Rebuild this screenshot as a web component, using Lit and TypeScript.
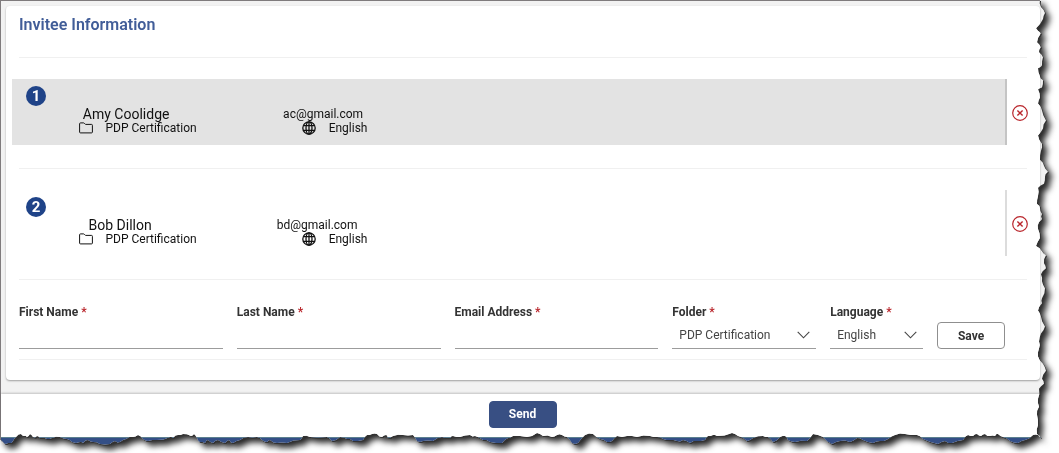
import { LitElement, html, css, svg } from "lit";
import { customElement, property, state } from "lit/decorators.js";
import { styleMap } from "lit/directives/style-map.js";

interface Invitee {
  name: string;
  email: string;
  folder: string;
  language: string;
}

// Torn paper outline. Each entry is [distance along the edge, depth of the tear].
const EDGE_LENGTH_RIGHT = 443;
const EDGE_LENGTH_BOTTOM = 1048;

const RIGHT_TEAR: number[][] = [
  [0, 8], [7, 7], [13, 3], [19, 5], [28, 12], [33, 7], [42, 11], [47, 7], [52, 9], [57, 5], [65, 6], [68, 10],
  [76, 8], [80, 5], [87, 6], [89, 10], [97, 8], [103, 10], [110, 6], [120, 2], [128, 5], [135, 10], [143, 6],
  [150, 7], [159, 8], [165, 4], [171, 0], [176, 3], [183, 4], [187, 10], [195, 10], [203, 11], [207, 8], [213, 6],
  [218, 6], [221, 9], [228, 10], [237, 8], [245, 12], [250, 6], [254, 2], [262, 4], [267, 2], [273, 7], [280, 6],
  [287, 3], [297, 6], [302, 6], [309, 10], [315, 7], [325, 3], [332, 7], [340, 9], [347, 9], [355, 10], [362, 5],
  [369, 2], [377, 6], [382, 4], [387, 9], [397, 10], [405, 9], [413, 11], [423, 10], [432, 11], [436, 7],
];

const BOTTOM_TEAR: number[][] = [
  [0, 5], [3, 3], [6, 1], [10, 2], [13, 4], [16, 8], [21, 11], [24, 9], [27, 8], [30, 11], [33, 8], [37, 9],
  [40, 7], [47, 6], [52, 7], [60, 8], [67, 6], [72, 3], [80, 3], [83, 2], [88, 5], [93, 3], [100, 1], [110, 1],
  [115, 4], [120, 3], [126, 6], [133, 8], [138, 10], [143, 6], [148, 4], [157, 5], [170, 8], [173, 7], [178, 10],
  [183, 11], [191, 9], [194, 11], [197, 7], [200, 3], [205, 2], [208, 5], [213, 2], [218, 5], [225, 2], [229, 5],
  [233, 2], [240, 5], [248, 8], [257, 8], [262, 5], [267, 3], [270, 5], [277, 2], [287, 2], [300, 5], [303, 9],
  [310, 8], [327, 8], [332, 4], [340, 8], [347, 6], [353, 4], [363, 5], [367, 10], [372, 11], [377, 11], [382, 8],
  [386, 10], [388, 7], [393, 9], [403, 10], [413, 10], [417, 4], [423, 4], [433, 4], [442, 8], [450, 7], [453, 9],
  [460, 8], [470, 10], [475, 9], [483, 5], [490, 3], [502, 2], [508, 7], [513, 9], [527, 8], [537, 12], [543, 9],
  [552, 8], [557, 10], [562, 10], [567, 8], [572, 2], [578, 2], [585, 10], [593, 11], [600, 6], [607, 3],
  [612, 4], [617, 9], [627, 9], [637, 8], [650, 9], [657, 8], [663, 6], [670, 5], [677, 4], [683, 5], [690, 2],
  [697, 4], [705, 5], [708, 9], [713, 10], [717, 9], [732, 12], [738, 9], [747, 4], [753, 7], [763, 9], [768, 8],
  [773, 3], [780, 8], [785, 9], [788, 5], [795, 3], [807, 4], [813, 11], [823, 8], [832, 1], [840, 4], [850, 3],
  [857, 7], [863, 5], [873, 2], [880, 4], [888, 6], [895, 10], [905, 11], [917, 10], [923, 6], [938, 1], [945, 4],
  [952, 2], [963, 5], [968, 10], [973, 9], [977, 11], [981, 9], [985, 11], [990, 9], [995, 9], [998, 11],
  [1003, 8], [1010, 4], [1018, 2], [1025, 5], [1033, 10], [1038, 10],
];

const JITTER = [0.8, -0.6, 0.4, -0.9, 0.6, 0.9, -0.4];

function roughen(points: number[][]): number[][] {
  const out: number[][] = [];
  points.forEach(([at, depth], i) => {
    out.push([at, depth]);
    const next = points[i + 1];
    if (next) {
      const middle = (depth + next[1]) / 2 + JITTER[i % JITTER.length];
      out.push([(at + next[0]) / 2, Math.max(0, middle)]);
    }
  });
  return out;
}

function tornPolygon(): string {
  const right = roughen(RIGHT_TEAR).map(
    ([at, depth]) => `calc(100% - ${depth}px) ${(at / EDGE_LENGTH_RIGHT) * 100}%`,
  );
  const bottom = roughen(BOTTOM_TEAR)
    .reverse()
    .map(([at, depth]) => `${(at / EDGE_LENGTH_BOTTOM) * 100}% calc(100% - ${depth}px)`);
  return `polygon(0 0, ${[...right, ...bottom].join(", ")})`;
}

const folderIcon = svg`<svg class="icon" width="14" height="12" viewBox="0 0 14 12" fill="none" stroke="currentColor" aria-hidden="true">
  <path d="M.6 10V1.8Q.6.9 1.5.9H4.6Q5 .9 5.3 1.3L6.1 2.1Q6.4 2.4 6.9 2.4H12.5Q13.4 2.4 13.4 3.3V10Q13.4 10.9 12.5 10.9H1.5Q.6 10.9.6 10Z"/>
</svg>`;

const globeIcon = svg`<svg class="icon" width="14" height="14" viewBox="0 0 14 14" fill="none" stroke="currentColor" stroke-width="1.3" aria-hidden="true">
  <circle cx="7" cy="7" r="6.2"/><ellipse cx="7" cy="7" rx="3" ry="6.2"/>
  <path d="M7 .8V13.2M1.4 4.6H12.6M1.4 9.4H12.6"/>
</svg>`;

@customElement("invitee-row")
export class InviteeRow extends LitElement {
  @property({ attribute: false }) invitee!: Invitee;
  @property({ type: Number }) position = 1;
  @property({ type: Boolean }) shaded = false;

  static styles = css`
    :host {
      display: grid;
      grid-template-columns: 1fr 26px;
      align-items: stretch;
      padding: 21px 0 23px;
      color: #111;
    }
    .summary {
      box-sizing: border-box;
      padding: 7px 0 8px 14px;
      border-right: 2px solid #dcdcdc;
      min-height: 66px;
    }
    .shaded {
      background: #e3e3e3;
      border-right-color: #c4c4c4;
    }
    .badge {
      display: flex;
      align-items: center;
      justify-content: center;
      width: 20px;
      height: 20px;
      margin-bottom: 1px;
      border-radius: 50%;
      background: #1f4388;
      color: #fff;
      font-size: 15px;
      font-weight: 700;
      line-height: 20px;
    }
    .line {
      display: flex;
      justify-content: space-around;
      align-items: center;
      width: 394px;
      max-width: 100%;
      height: 14px;
    }
    .name {
      font-size: 14px;
      line-height: 14px;
    }
    .email {
      font-size: 12px;
      line-height: 14px;
    }
    .detail {
      display: flex;
      align-items: center;
      gap: 13px;
      font-size: 12px;
      line-height: 14px;
    }
    .icon {
      display: block;
    }
    .remove {
      align-self: center;
      justify-self: center;
      display: block;
      padding: 2px 0 0;
      border: 0;
      background: none;
      color: #b9252b;
      cursor: pointer;
    }
  `;

  render() {
    const { name, email, folder, language } = this.invitee;
    return html`
      <div class="summary ${this.shaded ? "shaded" : ""}">
        <div class="badge">${this.position}</div>
        <div class="line">
          <span class="name">${name}</span>
          <span class="email">${email}</span>
        </div>
        <div class="line">
          <span class="detail">${folderIcon}<span>${folder}</span></span>
          <span class="detail">${globeIcon}<span>${language}</span></span>
        </div>
      </div>
      <button class="remove" type="button" aria-label="Remove ${name}">
        <svg class="icon" width="16" height="16" viewBox="0 0 16 16" fill="none" stroke="currentColor" aria-hidden="true">
          <circle cx="8" cy="8" r="7.3" stroke-width="1.2" />
          <path d="M5.4 5.4 10.6 10.6M10.6 5.4 5.4 10.6" stroke-width="1.4" />
        </svg>
      </button>
    `;
  }
}

@customElement("app-root")
export class AppRoot extends LitElement {
  @state() private invitees: Invitee[] = [
    { name: "Amy Coolidge", email: "ac@gmail.com", folder: "PDP Certification", language: "English" },
    { name: "Bob Dillon", email: "bd@gmail.com", folder: "PDP Certification", language: "English" },
  ];

  static styles = css`
    :host {
      display: block;
      padding: 0 11px 10px 0;
      background: #fff;
      font-family: Roboto, "Liberation Sans", sans-serif;
      color: #333;
    }
    .paper {
      filter: drop-shadow(1px 1px 0 #333) drop-shadow(4px 4px 3px rgba(0, 0, 0, 0.85));
    }
    .page {
      box-sizing: border-box;
      border-top: 1px solid #7f7b7d;
      border-left: 1px solid #7f7b7d;
      background: #f2f2f2;
    }
    .area {
      padding: 5px 8px 14px 5px;
    }
    .card {
      padding: 0 7px 20px 6px;
      border-radius: 4px;
      background: #fff;
      box-shadow: 0 1px 2px rgba(0, 0, 0, 0.35);
    }
    .title {
      margin: 0 7px;
      padding: 8px 0 22px;
      color: #415d98;
      font-size: 16px;
      font-weight: 600;
      line-height: 21px;
    }
    .rule {
      height: 1px;
      margin: 0 6px 0 7px;
      border: 0;
      background: #f0f0f0;
    }
    .form {
      display: grid;
      grid-template-columns: 204fr 204fr 204fr 144fr 93fr 68fr;
      gap: 14px;
      align-items: end;
      padding: 24px 28px 10px 7px;
    }
    .field {
      display: grid;
      grid-template-columns: minmax(0, 1fr);
      border-bottom: 1px solid #9c9c9c;
    }
    .label {
      font-size: 12px;
      font-weight: 700;
      line-height: 16px;
    }
    .star {
      color: #b9252b;
    }
    .control {
      grid-area: 2 / 1;
      box-sizing: border-box;
      width: 100%;
      height: 28px;
      margin: 0;
      padding: 0 7px;
      border: 0;
      outline: 0;
      appearance: none;
      background: transparent;
      color: #444;
      font-family: inherit;
      font-size: 12px;
      line-height: 16px;
    }
    .select {
      padding-top: 2px;
    }
    .chevron {
      grid-area: 2 / 1;
      align-self: center;
      justify-self: end;
      margin: 2px 6px 0 0;
      pointer-events: none;
    }
    .button {
      box-sizing: border-box;
      height: 27px;
      padding: 0;
      border: 1px solid #8f8f8f;
      border-radius: 4px;
      background: #fff;
      color: #333;
      font-family: inherit;
      font-size: 12px;
      font-weight: 700;
      line-height: 16px;
      cursor: pointer;
    }
    .send {
      width: 68px;
      padding-bottom: 2px;
      border-color: #384f83;
      background: #384f83;
      color: #fff;
    }
    .footer {
      display: flex;
      justify-content: center;
      padding: 7px 4px 9px 0;
      background: #fff;
      box-shadow: 0 -1px 2px rgba(0, 0, 0, 0.2);
    }
    .band {
      height: 7px;
      border-top: 1px solid #5c8090;
      background: #344f86;
    }
  `;

  private text(id: string, label: string, type: string) {
    return html`
      <div class="field">
        <label class="label" for=${id}>${label} <span class="star">*</span></label>
        <input class="control" id=${id} type=${type} required />
      </div>
    `;
  }

  private choice(id: string, label: string, option: string) {
    return html`
      <div class="field">
        <label class="label" for=${id}>${label} <span class="star">*</span></label>
        <select class="control select" id=${id} required>
          <option>${option}</option>
        </select>
        <svg class="chevron" width="13" height="8" viewBox="0 0 13 8" fill="none" stroke="#444" aria-hidden="true">
          <path d="M.7.8 6.5 6.8 12.3.8" stroke-width="1.1" />
        </svg>
      </div>
    `;
  }

  render() {
    return html`
      <div class="paper">
        <div class="page" style=${styleMap({ clipPath: tornPolygon() })}>
          <main class="area">
            <section class="card">
              <h1 class="title">Invitee Information</h1>
              <hr class="rule" />
              ${this.invitees.map(
                (invitee, i) => html`
                  <invitee-row .invitee=${invitee} .position=${i + 1} .shaded=${i % 2 === 0}></invitee-row>
                  <hr class="rule" />
                `,
              )}
              <form class="form" @submit=${(e: Event) => e.preventDefault()}>
                ${this.text("first-name", "First Name", "text")}
                ${this.text("last-name", "Last Name", "text")}
                ${this.text("email", "Email Address", "email")}
                ${this.choice("folder", "Folder", "PDP Certification")}
                ${this.choice("language", "Language", "English")}
                <button class="button" type="submit">Save</button>
              </form>
              <hr class="rule" />
            </section>
          </main>
          <footer class="footer">
            <button class="button send" type="button">Send</button>
          </footer>
          <div class="band"></div>
        </div>
      </div>
    `;
  }
}
